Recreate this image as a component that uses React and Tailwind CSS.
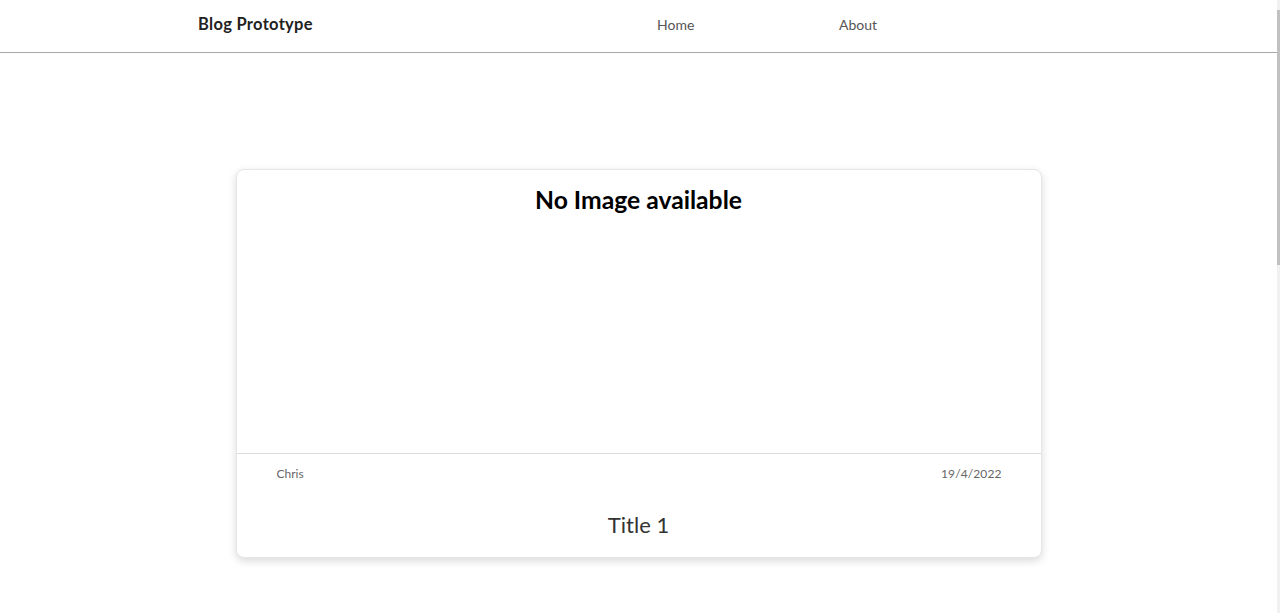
export default function App() {
  return (
    <div className="relative min-h-[613px] bg-white text-[#222]" style={{ fontFamily: 'Lato, "Noto Sans", sans-serif' }}>
      <header className="h-[53px] border-b border-[#a8a8a8] flex items-center pb-[3px]">
        <div className="pl-[198px] w-[657px] text-[16.5px] font-bold text-[#222] tracking-[0.3px]">Blog Prototype</div>
        <nav className="flex items-center text-[14px] text-[#555]">
          <a className="w-[182px]">Home</a>
          <a>About</a>
        </nav>
      </header>

      <main className="pt-[116px] flex justify-center pr-[3px]">
        <article className="w-[806px] rounded-lg border border-[#e6e6e6] bg-white shadow-[0_3px_8px_rgba(0,0,0,0.15)]">
          <div className="h-[284px] border-b border-[#dcdcdc] flex justify-center pt-[11px]">
            <h2 className="text-[24.7px] font-bold text-black">No Image available</h2>
          </div>
          <div className="flex justify-between pl-[40px] pr-[39px] pt-[11px] text-[12px] text-[#666]">
            <span>Chris</span>
            <span className="tracking-[0.1px]">19/4/2022</span>
          </div>
          <h3 className="text-center text-[22px] text-[#333] pt-[25px] pb-[16px]">Title 1</h3>
        </article>
      </main>

      <div className="fixed top-0 right-0 h-[613px] w-[3px] bg-[#f1f1f1]">
        <div className="mt-[10px] h-[255px] bg-[#c1c1c1]" />
      </div>
    </div>
  )
}
